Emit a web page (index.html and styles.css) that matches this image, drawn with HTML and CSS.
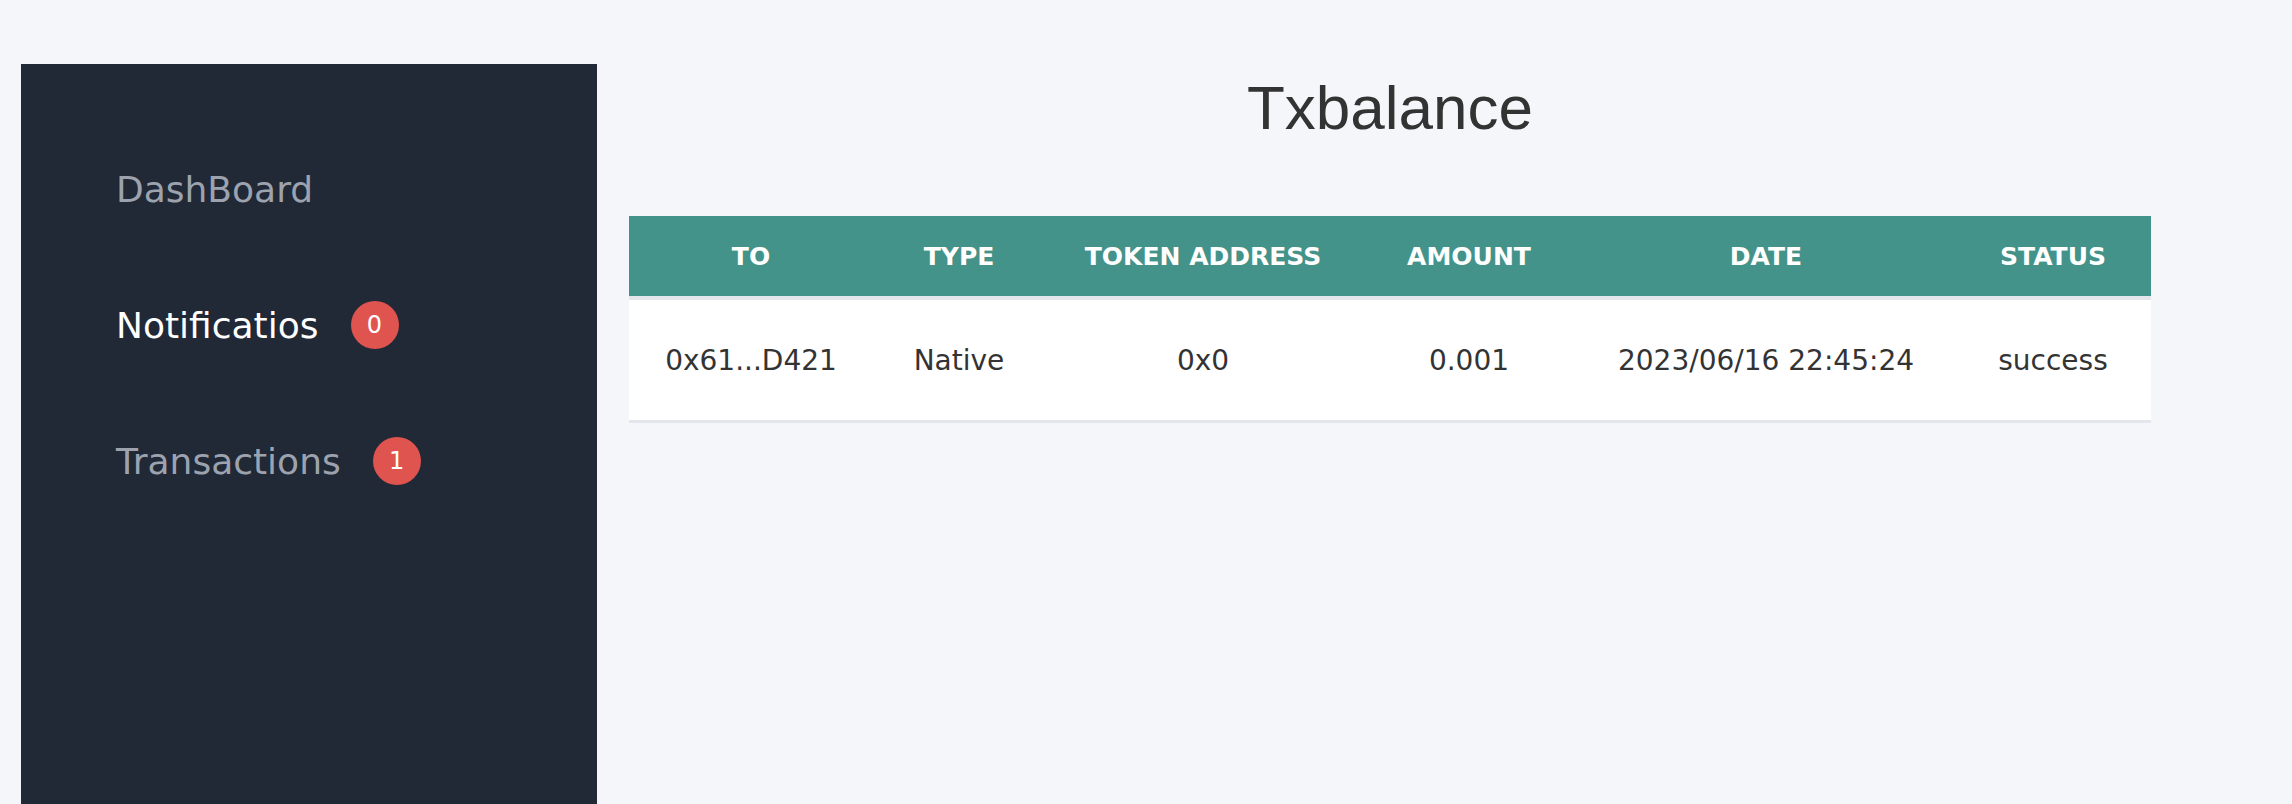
FILE: index.html
```html
<!DOCTYPE html>
<html lang="en">
<head>
<meta charset="utf-8">
<title>Txbalance</title>
<link rel="stylesheet" href="styles.css">
</head>
<body>
<div class="layout">
  <aside class="sidebar">
    <nav class="nav">
      <a class="nav-item" href="#">DashBoard</a>
      <a class="nav-item active" href="#">Notificatios <span class="badge">0</span></a>
      <a class="nav-item" href="#">Transactions <span class="badge">1</span></a>
    </nav>
  </aside>
  <main class="main">
    <h1 class="title">Txbalance</h1>
    <table class="tx-table">
      <colgroup>
        <col class="c-to"><col class="c-type"><col class="c-token"><col class="c-amount"><col class="c-date"><col class="c-status">
      </colgroup>
      <thead>
        <tr>
          <th>TO</th>
          <th>TYPE</th>
          <th>TOKEN ADDRESS</th>
          <th>AMOUNT</th>
          <th>DATE</th>
          <th>STATUS</th>
        </tr>
      </thead>
      <tbody>
        <tr>
          <td>0x61...D421</td>
          <td>Native</td>
          <td>0x0</td>
          <td>0.001</td>
          <td>2023/06/16 22:45:24</td>
          <td>success</td>
        </tr>
      </tbody>
    </table>
  </main>
</div>
</body>
</html>
```
FILE: styles.css
```css
html, body {
  margin: 0;
  padding: 0;
  background: #f5f6fa;
  overflow: hidden;
}
body {
  font-family: "DejaVu Sans", sans-serif;
  color: #333333;
}
.layout {
  display: flex;
  align-items: flex-start;
  padding: 64px 0 0 21px;
}
.sidebar {
  width: 576px;
  height: calc(100vh - 64px);
  background: #212836;
  box-sizing: border-box;
  padding: 102px 0 0 95px;
  flex-shrink: 0;
}
.nav {
  display: flex;
  flex-direction: column;
  gap: 88px;
}
.nav-item {
  display: flex;
  align-items: center;
  gap: 32px;
  height: 48px;
  font-size: 36px;
  line-height: 48px;
  color: #9ca3af;
  text-decoration: none;
}
.nav-item.active {
  color: #ffffff;
}
.badge {
  display: flex;
  align-items: center;
  justify-content: center;
  width: 48px;
  height: 48px;
  border-radius: 50%;
  background: #df544f;
  color: #ffffff;
  font-size: 24px;
  line-height: 1;
  margin-top: -3px;
}
.main {
  padding: 8px 0 0 32px;
  width: 1522px;
}
.title {
  margin: 0 0 72px;
  font-family: "Liberation Sans", Arial, sans-serif;
  font-weight: 400;
  font-size: 62px;
  line-height: 72px;
  text-align: center;
  color: #333333;
}
.tx-table {
  width: 1522px;
  border-collapse: collapse;
  table-layout: fixed;
}
.c-to { width: 244px; }
.c-type { width: 172px; }
.c-token { width: 316px; }
.c-amount { width: 216px; }
.c-date { width: 378px; }
.c-status { width: 196px; }
.tx-table thead tr {
  background: #44938a;
  border-bottom: 4px solid #e4e6eb;
}
.tx-table th {
  height: 80px;
  padding: 0;
  font-size: 25px;
  font-weight: 700;
  color: #ffffff;
  text-align: center;
  white-space: nowrap;
}
.tx-table tbody tr {
  background: #ffffff;
  border-bottom: 3px solid #e4e6eb;
}
.tx-table td {
  height: 120px;
  padding: 0;
  font-size: 28px;
  text-align: center;
  color: #333333;
  white-space: nowrap;
}
```
